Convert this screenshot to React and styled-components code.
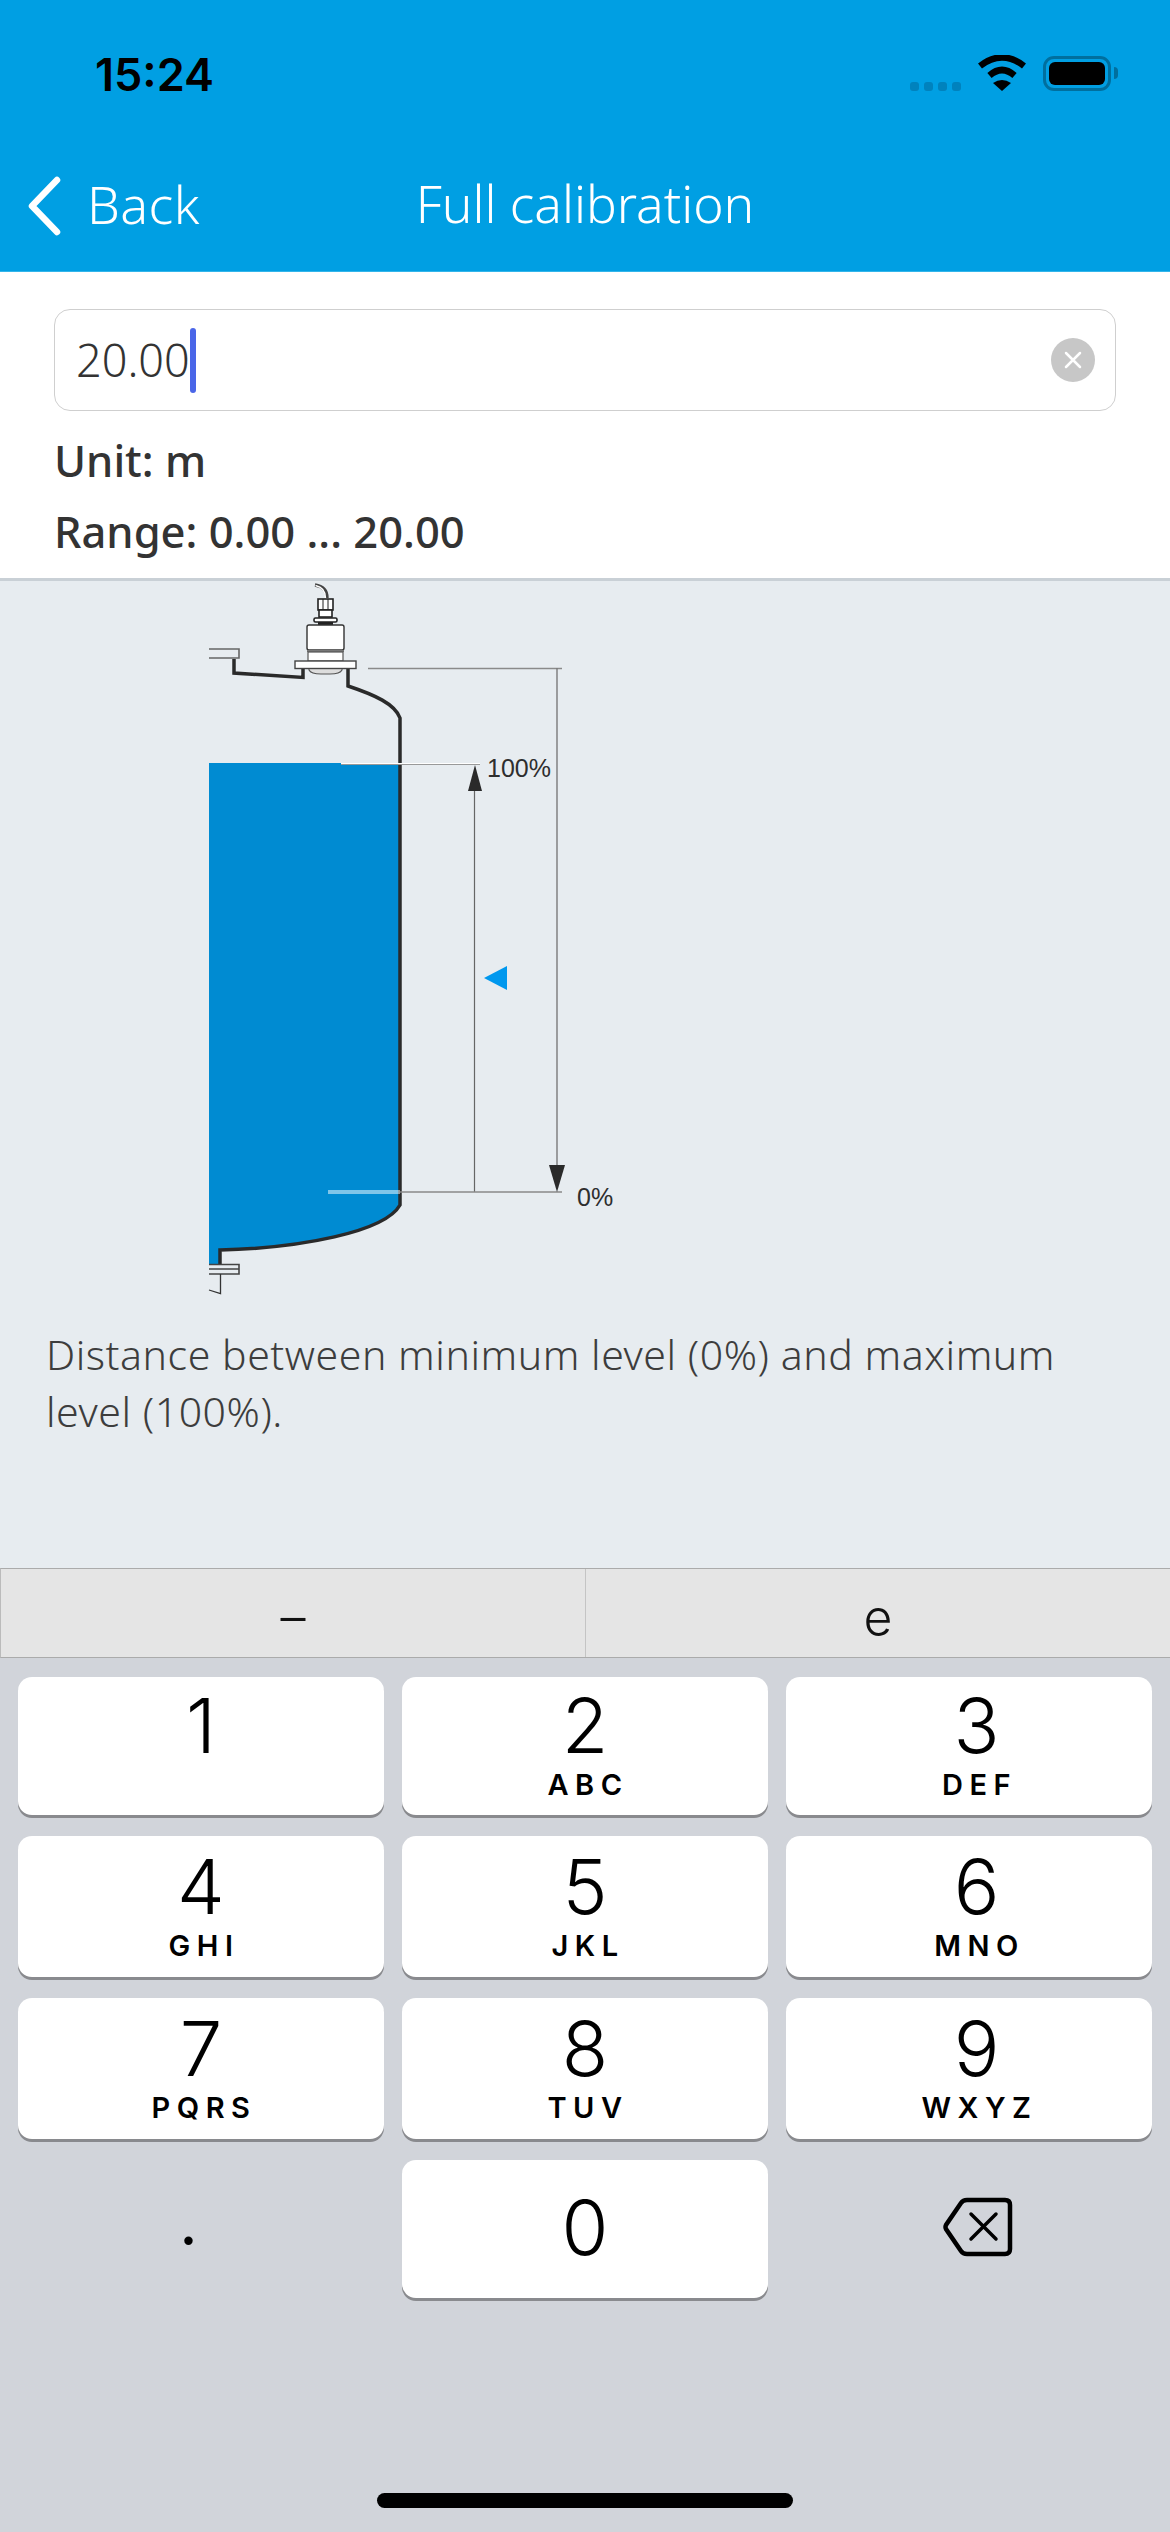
import React from "react";
import styled, { createGlobalStyle } from "styled-components";

const keys = [
  { digit: "1", letters: "" },
  { digit: "2", letters: "ABC" },
  { digit: "3", letters: "DEF" },
  { digit: "4", letters: "GHI" },
  { digit: "5", letters: "JKL" },
  { digit: "6", letters: "MNO" },
  { digit: "7", letters: "PQRS" },
  { digit: "8", letters: "TUV" },
  { digit: "9", letters: "WXYZ" },
];

const App = () => {
  return (
    <Page>
      <GlobalStyle />
      <Header>
        <StatusBar>
          <Time>15:24</Time>
          <StatusIcons>
            <SignalDots>
              <i />
              <i />
              <i />
              <i />
            </SignalDots>
            <svg width="48" height="36" viewBox="0 0 48 36">
              <path d="M2 11Q24 -6 46 11" fill="none" stroke="#000" strokeWidth="6.5" />
              <path d="M11.5 20.5Q24 9.5 36.5 20.5" fill="none" stroke="#000" strokeWidth="6.5" />
              <path d="M15 28Q24 22 33 28L24 36Z" fill="#000" />
            </svg>
            <Battery>
              <BatteryFill />
              <BatteryNub />
            </Battery>
          </StatusIcons>
        </StatusBar>
        <NavBar>
          <BackLink>
            <svg width="36" height="60" viewBox="0 0 36 60">
              <path
                d="M31 4L6 30L31 56"
                fill="none"
                stroke="#fff"
                strokeWidth="6.5"
                strokeLinecap="round"
                strokeLinejoin="round"
              />
            </svg>
            <span>Back</span>
          </BackLink>
          <Title>Full calibration</Title>
        </NavBar>
      </Header>

      <FormPanel>
        <InputBox>
          <InputValue>20.00</InputValue>
          <Caret />
          <ClearButton>
            <svg width="20" height="20" viewBox="0 0 20 20">
              <path d="M3 3L17 17M17 3L3 17" stroke="#fff" strokeWidth="2.5" strokeLinecap="round" />
            </svg>
          </ClearButton>
        </InputBox>
        <InfoLine>Unit: m</InfoLine>
        <InfoLine>Range: 0.00 ... 20.00</InfoLine>
      </FormPanel>

      <Content>
        <TankDrawing />
        <Description>
          Distance between minimum level (0%) and maximum level (100%).
        </Description>
      </Content>

      <Toolbar>
        <ToolbarCell>–</ToolbarCell>
        <ToolbarCell>e</ToolbarCell>
      </Toolbar>

      <Keyboard>
        <KeyGrid>
          {keys.map((k) => (
            <Key key={k.digit}>
              <Digit>{k.digit}</Digit>
              <Letters>{k.letters}</Letters>
            </Key>
          ))}
          <Period>.</Period>
          <Key>
            <Digit>0</Digit>
          </Key>
          <Backspace>
            <svg width="70" height="60" viewBox="0 0 70 60">
              <path
                d="M24 3H62Q67 3 67 8V52Q67 57 62 57H24Q20 57 18 54L3 32Q2 30 3 28L18 6Q20 3 24 3Z"
                fill="none"
                stroke="#000"
                strokeWidth="4.5"
              />
              <path d="M28 17L53 42M53 17L28 42" stroke="#000" strokeWidth="3.5" strokeLinecap="round" />
            </svg>
          </Backspace>
        </KeyGrid>
        <HomeBar />
      </Keyboard>
    </Page>
  );
};

// drawn in page pixels minus the svg origin (205, 582)
const TankDrawing = () => (
  <Drawing width="420" height="724" viewBox="205 582 420 724">
    <path d="M209 763H400V1205C385 1232 300 1248 220 1250V1264H209Z" fill="#008BD2" />
    {/* vessel outline */}
    <path
      d="M234 659V673L303 677.5V668M348 668V686C375 695 395 704 400 718V1205C385 1232 300 1248 220 1250V1264"
      fill="none"
      stroke="#2a2a2a"
      strokeWidth="3.5"
    />
    <path d="M209 649H239V658H209" fill="none" stroke="#666" strokeWidth="1.6" />
    <path d="M209 1264.5H239V1274H209M209 1269H239" fill="none" stroke="#444" strokeWidth="1.6" />
    <path d="M220.5 1274V1293.5L209 1290" fill="none" stroke="#333" strokeWidth="1.3" />

    {/* sensor */}
    <path d="M315 585C322 586 327 590 327 598" fill="none" stroke="#444" strokeWidth="3.4" />
    <path d="M315.5 585.5C322 587 325.5 591 325.5 598" fill="none" stroke="#fff" strokeWidth="1.4" />
    <rect x="318" y="599" width="15" height="11" fill="#fff" stroke="#222" strokeWidth="1.6" />
    <path d="M323 599V610M328 599V610" stroke="#222" strokeWidth="1" />
    <rect x="319" y="610" width="13" height="7" fill="#fff" stroke="#222" strokeWidth="1.6" />
    <rect x="314" y="618" width="23" height="4" rx="1.5" fill="#fff" stroke="#222" strokeWidth="1.6" />
    <rect x="318" y="622" width="15" height="3" fill="#222" />
    <rect x="307" y="625" width="37" height="25" rx="2" fill="#fff" stroke="#333" strokeWidth="1.4" />
    <rect x="307" y="650" width="37" height="2" fill="#777" />
    <rect x="308" y="652" width="35" height="9" fill="#fff" stroke="#555" strokeWidth="1.2" />
    <path d="M309 668.5H342V670Q340 674 330 674H321Q311 674 309 670Z" fill="#ddd" stroke="#555" strokeWidth="1.1" />
    <rect x="295" y="661" width="61" height="7.5" fill="#fff" stroke="#444" strokeWidth="1.4" />

    {/* dimension lines */}
    <path d="M368 668.5H562" fill="none" stroke="#8a8a8a" strokeWidth="1.3" />
    <path d="M557 668V1170" stroke="#7a7a7a" strokeWidth="1.4" />
    <path d="M474.5 785V1192" stroke="#666" strokeWidth="1.2" />
    <path d="M341 763.5H480" stroke="#fff" strokeWidth="1" />
    <path d="M341 764.5H480" stroke="#999" strokeWidth="1.2" />
    <path d="M328 1191H400" stroke="#fff" strokeWidth="1.2" />
    <path d="M328 1193H400" stroke="#fff" strokeWidth="1.2" />
    <path d="M400 1192H562" stroke="#8a8a8a" strokeWidth="1.3" />
    <path d="M475 765L482 791H468Z" fill="#2a2a2a" />
    <path d="M557 1192L549 1165H565Z" fill="#2a2a2a" />
    <DrawingLabel x="487" y="777">100%</DrawingLabel>
    <DrawingLabel x="577" y="1206">0%</DrawingLabel>
    <path d="M484 978L507 966V990Z" fill="#0098EE" />
  </Drawing>
);

const GlobalStyle = createGlobalStyle`
  body {
    margin: 0;
    background: #d1d4da;
  }
`;

const Page = styled.div`
  width: 1170px;
  height: 2532px;
  display: flex;
  flex-direction: column;
  overflow: hidden;
  font-family: "Noto Sans", sans-serif;
`;

const Header = styled.header`
  height: 272px;
  flex: none;
  box-sizing: border-box;
  background: #009fe3;
  border-bottom: 1px solid #33b5ea;
  color: #fff;
`;

const StatusBar = styled.div`
  height: 148px;
  box-sizing: border-box;
  padding: 52px 59px 0 95px;
  display: flex;
  justify-content: space-between;
  align-items: flex-start;
`;

const Time = styled.div`
  font-family: Inter, sans-serif;
  font-size: 45px;
  line-height: 46px;
  font-weight: 600;
  color: #000;
`;

const StatusIcons = styled.div`
  display: flex;
  align-items: flex-end;
  gap: 17px;
  margin-top: 3px;
`;

const SignalDots = styled.div`
  display: flex;
  gap: 5px;
  i {
    width: 9px;
    height: 9px;
    border-radius: 3px;
    background: #0082bd;
  }
`;

const Battery = styled.div`
  position: relative;
  width: 68px;
  height: 35px;
  box-sizing: border-box;
  padding: 3px;
  border: 3px solid #006f9e;
  border-radius: 11px;
`;

const BatteryFill = styled.div`
  height: 100%;
  background: #000;
  border-radius: 6px;
`;

const BatteryNub = styled.div`
  position: absolute;
  right: -10px;
  top: 8px;
  width: 4px;
  height: 12px;
  background: #006f9e;
  border-radius: 0 6px 6px 0;
`;

const NavBar = styled.nav`
  display: grid;
  grid-template-columns: 1fr auto 1fr;
  grid-template-rows: 66px;
  align-items: center;
  margin-top: 25px;
`;

const BackLink = styled.div`
  display: flex;
  align-items: center;
  gap: 25px;
  padding-left: 26px;
  font-size: 52px;
  font-weight: 300;
  letter-spacing: 0.4px;
  span {
    line-height: 61px;
    margin-bottom: 5px;
  }
`;

const Title = styled.h1`
  margin: 0 0 5px;
  font-size: 51.5px;
  line-height: 61px;
  font-weight: 300;
  white-space: nowrap;
`;

const FormPanel = styled.section`
  height: 309px;
  flex: none;
  box-sizing: border-box;
  padding: 37px 54px 0;
  background: #fff;
  border-bottom: 3px solid #c9d0d6;
`;

const InputBox = styled.div`
  height: 102px;
  box-sizing: border-box;
  display: flex;
  align-items: center;
  padding: 0 20px 0 21px;
  border: 1.5px solid #cfcfcf;
  border-radius: 16px;
  margin-bottom: 14px;
`;

const InputValue = styled.span`
  margin-bottom: 2px;
  font-size: 45px;
  font-weight: 300;
  color: #333;
`;

const Caret = styled.span`
  width: 6px;
  height: 65px;
  border-radius: 3px;
  background: #4a66e8;
`;

const ClearButton = styled.span`
  width: 44px;
  height: 44px;
  margin-left: auto;
  border-radius: 50%;
  background: #c7c7c7;
  display: flex;
  align-items: center;
  justify-content: center;
`;

const InfoLine = styled.div`
  height: 71px;
  line-height: 71px;
  font-size: 43.5px;
  font-weight: 500;
  color: #333;
`;

const Content = styled.main`
  flex: 1;
  background: #e7ecf0;
`;

const Drawing = styled.svg`
  display: block;
  margin: 1px 0 0 205px;
`;

const DrawingLabel = styled.text`
  font-family: "Liberation Sans", sans-serif;
  font-size: 25px;
  fill: #2e2e2e;
`;

const Description = styled.p`
  margin: 20px 46px 0;
  font-size: 41px;
  line-height: 57px;
  font-weight: 300;
  letter-spacing: 0.55px;
  color: #3d3d3d;
`;

const Toolbar = styled.div`
  height: 90px;
  flex: none;
  box-sizing: border-box;
  display: flex;
  background: #e5e5e5;
  border-top: 1.5px solid #ababab;
  border-bottom: 1.5px solid #ababab;
  border-left: 1px solid #bbb;
`;

const ToolbarCell = styled.div`
  flex: 1;
  display: flex;
  align-items: center;
  justify-content: center;
  padding-top: 8px;
  font-family: Inter, sans-serif;
  font-size: 50px;
  font-weight: 300;
  color: #111;
  & + & {
    border-left: 1px solid #c4c4c4;
  }
`;

const Keyboard = styled.div`
  height: 874px;
  flex: none;
  box-sizing: border-box;
  padding: 19px 18px 0;
  background: #d1d4da;
  position: relative;
`;

const KeyGrid = styled.div`
  display: grid;
  grid-template-columns: repeat(3, 366px);
  grid-template-rows: 138px 141px 141px 138px;
  column-gap: 18px;
  row-gap: 21px;
`;

const Key = styled.div`
  display: flex;
  flex-direction: column;
  align-items: center;
  justify-content: center;
  padding-bottom: 5px;
  background: #fff;
  border-radius: 14px;
  box-shadow: 0 3px 0 #898a8e;
  color: #000;
  &:nth-child(3n) {
    padding-left: 15px;
  }
`;

const Digit = styled.div`
  font-family: Inter, sans-serif;
  font-size: 76px;
  line-height: 76px;
  font-weight: 300;
`;

const Letters = styled.div`
  height: 30px;
  line-height: 30px;
  margin-top: 7px;
  font-family: Inter, sans-serif;
  font-size: 29px;
  font-weight: 600;
  letter-spacing: 6.5px;
  margin-right: -6px;
`;

const Period = styled.div`
  display: flex;
  align-items: center;
  justify-content: center;
  padding: 0 25px 14px 0;
  font-family: Inter, sans-serif;
  font-size: 64px;
  line-height: 64px;
  color: #000;
`;

const Backspace = styled.div`
  display: flex;
  align-items: center;
  justify-content: center;
  padding: 0 0 5px 17px;
`;

const HomeBar = styled.div`
  position: absolute;
  left: 377px;
  top: 835px;
  width: 416px;
  height: 15px;
  border-radius: 8px;
  background: #000;
`;

export default App;
